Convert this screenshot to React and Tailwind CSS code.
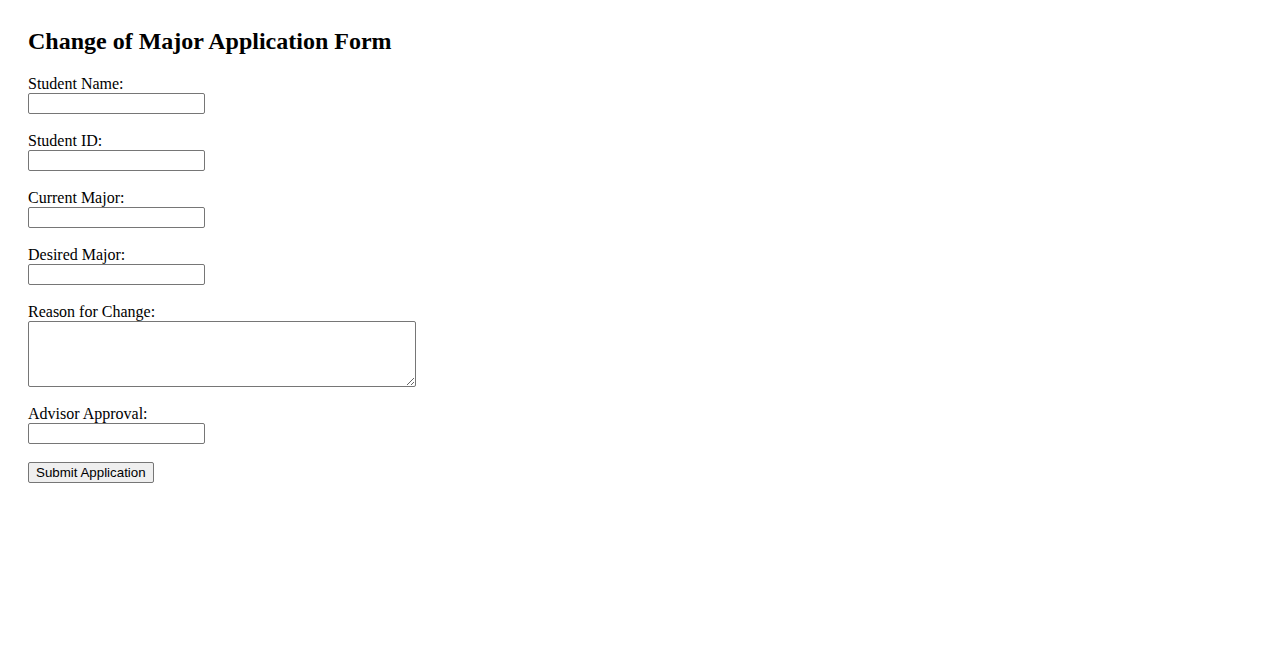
import React, { useState } from 'react';

const fields = [
  { name: 'studentName', label: 'Student Name:' },
  { name: 'studentId', label: 'Student ID:' },
  { name: 'currentMajor', label: 'Current Major:' },
  { name: 'desiredMajor', label: 'Desired Major:' },
];

function App() {
  const [form, setForm] = useState({
    studentName: '',
    studentId: '',
    currentMajor: '',
    desiredMajor: '',
    reason: '',
    advisorApproval: ''
  });

  const handleChange = (e) => {
    const { name, value } = e.target;
    setForm(prev => ({ ...prev, [name]: value }));
  };

  const inputClass =
    'block -mt-px w-[177px] h-[21px] border border-[#767676] rounded-[2px] px-[2px] py-[1px] text-[13.33px] bg-white outline-none';

  return (
    <div className="min-h-screen bg-white text-black font-['Liberation_Serif',serif] pt-[28px] pl-[28px]">
      <h2 className="text-[24px] leading-[27.6px] font-bold mb-[19.9px]">Change of Major Application Form</h2>

      <form onSubmit={(e) => e.preventDefault()}>
        {fields.map(f => (
          <div key={f.name} className="mb-[18.6px]">
            <label htmlFor={f.name} className="block text-[16px] leading-[18.4px]">{f.label}</label>
            <input
              id={f.name}
              name={f.name}
              type="text"
              value={form[f.name]}
              onChange={handleChange}
              className={inputClass}
            />
          </div>
        ))}

        <div className="mb-[18.6px]">
          <label htmlFor="reason" className="block text-[16px] leading-[18.4px]">Reason for Change:</label>
          <textarea
            id="reason"
            name="reason"
            value={form.reason}
            onChange={handleChange}
            className="block -mt-px w-[388px] h-[66px] border border-[#767676] rounded-[2px] p-[2px] text-[13.33px] font-['Liberation_Mono',monospace] bg-white outline-none resize"
          />
        </div>

        <div className="mb-[18.6px]">
          <label htmlFor="advisorApproval" className="block text-[16px] leading-[18.4px]">Advisor Approval:</label>
          <input
            id="advisorApproval"
            name="advisorApproval"
            type="text"
            value={form.advisorApproval}
            onChange={handleChange}
            className={inputClass}
          />
        </div>

        <button
          type="submit"
          className="block h-[21px] px-[7px] border border-[#767676] rounded-[2px] bg-[#efefef] text-[13.33px] leading-[15px] font-['Liberation_Sans',Arial,sans-serif] text-black"
        >
          Submit Application
        </button>
      </form>
    </div>
  );
}

export default App;
